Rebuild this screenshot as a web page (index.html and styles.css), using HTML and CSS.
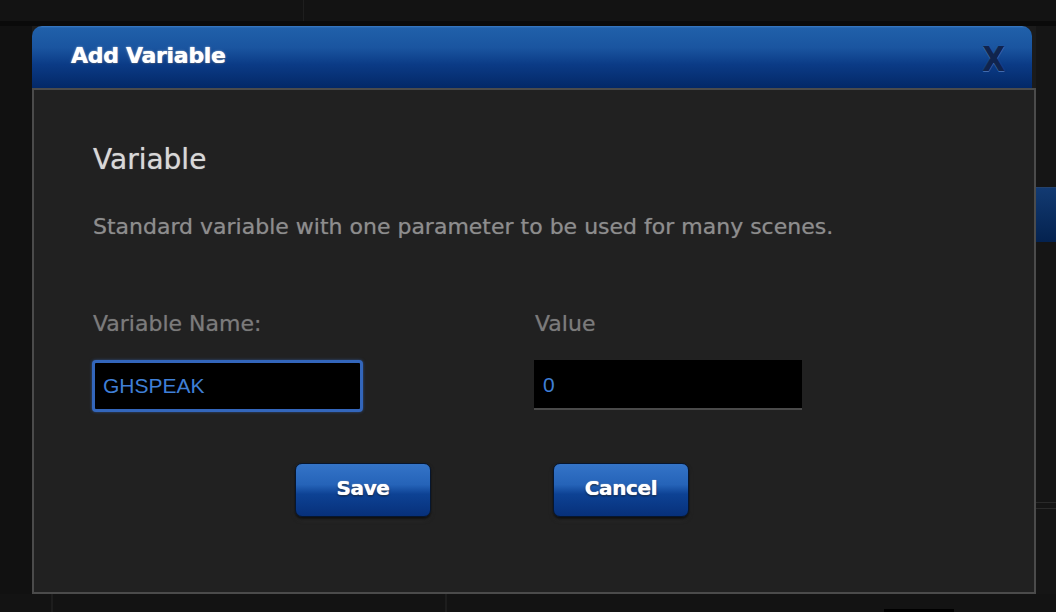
FILE: index.html
```html
<!DOCTYPE html>
<html lang="en">
<head>
<meta charset="utf-8">
<title>Add Variable</title>
<link rel="stylesheet" href="styles.css">
</head>
<body>
<div class="app">
  <header class="topbar"><div class="tb-left"></div><div class="tb-right"></div></header>
  <div class="main">
    <aside class="side"></aside>
    <section class="center"></section>
    <aside class="rail">
      <div class="rail-item"></div>
      <div class="rail-line"></div>
    </aside>
  </div>
  <footer class="bottombar">
    <div class="bb-a"></div>
    <div class="bb-b"></div>
    <div class="bb-c"><span class="bb-tab"></span></div>
  </footer>
</div>

<div class="modal">
  <div class="modal-head">
    <h1 class="modal-title">Add Variable</h1>
    <span class="modal-close">X</span>
  </div>
  <div class="modal-body">
    <h2 class="section-title">Variable</h2>
    <p class="desc">Standard variable with one parameter to be used for many scenes.</p>
    <div class="fields">
      <div class="field">
        <label class="field-label">Variable Name:</label>
        <div class="input input-focus">GHSPEAK</div>
      </div>
      <div class="field">
        <label class="field-label">Value</label>
        <div class="input input-plain">0</div>
      </div>
    </div>
    <div class="actions">
      <button class="btn">Save</button>
      <button class="btn">Cancel</button>
    </div>
  </div>
</div>
</body>
</html>
```

FILE: styles.css
```css
* { box-sizing: border-box; }

html, body {
  margin: 0;
  padding: 0;
  width: 1056px;
  height: 612px;
  overflow: hidden;
  background: #121212;
  font-family: "DejaVu Sans", Verdana, sans-serif;
}

.app {
  display: flex;
  flex-direction: column;
  width: 1056px;
  height: 612px;
}

.topbar {
  height: 26px;
  display: flex;
  background: #131313;
  border-bottom: 5px solid #0a0a0a;
}
.tb-left { width: 304px; border-right: 1px solid #1e1e1e; }
.tb-right { flex: 1; }

.main {
  flex: 1;
  display: flex;
}
.side { width: 32px; background: #111; }
.center { flex: 1; background: #1b1b1b; }
.rail {
  width: 20px;
  background: #151515;
  padding-top: 161px;
}
.rail-item {
  height: 55px;
  border-top: 1px solid #24426d;
  background: linear-gradient(#123a72, #04224f);
}
.rail-line {
  margin-top: 260px;
  height: 7px;
  border-top: 1px solid #2a2a2a;
  border-bottom: 1px solid #2a2a2a;
}

.bottombar {
  height: 18px;
  display: flex;
  background: #131313;
}
.bb-a { width: 53px; border-right: 2px solid #1d1d1d; }
.bb-b { width: 394px; border-right: 2px solid #1d1d1d; }
.bb-c { flex: 1; display: flex; align-items: flex-end; padding-left: 437px; }
.bb-tab { width: 70px; height: 3px; background: #000; }

/* modal */
.modal {
  position: absolute;
  left: 32px;
  top: 26px;
  width: 1004px;
}

.modal-head {
  width: 1000px;
  height: 62px;
  border-radius: 10px 10px 0 0;
  background: linear-gradient(#3c7bc4 0, #2060aa 2px, #1a55a0 35%, #0b3b86 62%, #032867 100%);
  display: flex;
  align-items: center;
  justify-content: space-between;
  padding: 0 26px 4px 39px;
}

.modal-title {
  margin: 0;
  font-family: "DejaVu Sans", Verdana, sans-serif;
  font-weight: bold;
  font-size: 22px;
  letter-spacing: -0.3px;
  color: #fff;
  text-shadow: 0 0 1px #fff, 0 0 3px rgba(255,255,255,0.35), 0 1px 1px rgba(0,0,0,0.4);
}

.modal-close {
  font-family: "DejaVu Sans", Verdana, sans-serif;
  font-weight: bold;
  font-size: 33px;
  line-height: 1;
  color: #10244e;
  text-shadow: 0 1px 0 rgba(110,150,215,0.55), 0 0 2px rgba(60,100,170,0.5);
  margin-top: 8px;
  transform: scaleX(0.9);
}

.modal-body {
  height: 506px;
  border: 2px solid #4b4b4b;
  background: #212121;
  padding: 54px 0 0 59px;
}

.section-title {
  margin: 0;
  font-weight: normal;
  font-size: 28px;
  line-height: 32px;
  color: #d8d8d8;
  text-shadow: 0 0 1px rgba(216,216,216,0.7);
}

.desc {
  margin: 38px 0 0;
  font-size: 22px;
  line-height: 26px;
  color: #8d8d8d;
  text-shadow: 0 0 1px rgba(141,141,141,0.6);
}

.fields {
  margin-top: 71px;
  display: grid;
  grid-template-columns: 270px 268px;
  column-gap: 171px;
}
.field { display: flex; flex-direction: column; }
.field:first-child { margin-left: -1px; }
.field-label {
  font-size: 22px;
  line-height: 26px;
  color: #7b7b7b;
  text-shadow: 0 0 1px rgba(123,123,123,0.6);
  padding-left: 1px;
  margin-bottom: 23px;
}

.input {
  display: flex;
  align-items: center;
  background: #000;
  font-family: "Liberation Sans", Arial, sans-serif;
  font-size: 21px;
  color: #3f7fd6;
}
.input-focus {
  height: 52px;
  border: 3px solid #3366bb;
  border-radius: 4px;
  box-shadow: 0 0 3px rgba(60,110,200,0.6);
  padding-left: 8px;
}
.input-plain {
  height: 50px;
  border-bottom: 2px solid #4a4a4a;
  padding-left: 9px;
  padding-top: 2px;
}

.actions {
  display: flex;
  gap: 122px;
  margin: 51px 0 0 202px;
}

.btn {
  width: 136px;
  height: 54px;
  border: 1px solid #06162f;
  border-radius: 7px;
  background: linear-gradient(#3474c8 0, #2563b8 40%, #0d4294 58%, #07307a 100%);
  box-shadow: 0 2px 3px rgba(0,0,0,0.7), 0 3px 4px rgba(70,70,70,0.35);
  color: #fff;
  font-family: "DejaVu Sans", Verdana, sans-serif;
  font-weight: bold;
  font-size: 20px;
  letter-spacing: -0.4px;
  text-shadow: 0 0 1px #fff, 0 1px 2px rgba(0,0,0,0.8);
  padding: 0 0 4px;
  cursor: pointer;
}
```
